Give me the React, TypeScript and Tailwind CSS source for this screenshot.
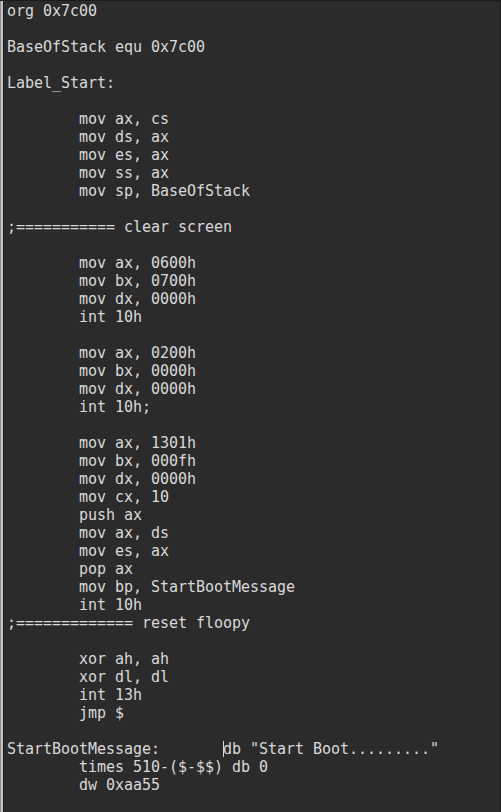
const lines: string[] = [
  "org 0x7c00",
  "",
  "BaseOfStack equ 0x7c00",
  "",
  "Label_Start:",
  "",
  "        mov ax, cs",
  "        mov ds, ax",
  "        mov es, ax",
  "        mov ss, ax",
  "        mov sp, BaseOfStack",
  "",
  ";=========== clear screen",
  "",
  "        mov ax, 0600h",
  "        mov bx, 0700h",
  "        mov dx, 0000h",
  "        int 10h",
  "",
  "        mov ax, 0200h",
  "        mov bx, 0000h",
  "        mov dx, 0000h",
  "        int 10h;",
  "",
  "        mov ax, 1301h",
  "        mov bx, 000fh",
  "        mov dx, 0000h",
  "        mov cx, 10",
  "        push ax",
  "        mov ax, ds",
  "        mov es, ax",
  "        pop ax",
  "        mov bp, StartBootMessage",
  "        int 10h",
  ";============= reset floopy",
  "",
  "        xor ah, ah",
  "        xor dl, dl",
  "        int 13h",
  "        jmp $",
  "",
];

export default function App() {
  return (
    <div className="w-[501px] h-[812px] overflow-hidden bg-[#2b2b2b] flex border-t border-[#1c1c1c]">
      {/* left gutter edge */}
      <div className="w-[3px] bg-[#c4c4c4] border-l border-[#8c8c8c]" />
      <div className="w-px bg-[#1a1a1a]" />
      <div
        className="flex-1 pl-[3px] pt-px text-[15px] leading-[18px] text-[#d9d9d9] whitespace-pre tracking-[-0.03px] border-r border-[#1c1c1c]"
        style={{ fontFamily: '"DejaVu Sans Mono", "Liberation Mono", monospace' }}
      >
        {lines.map((line, i) => (
          <div key={i} className="h-[18px]">
            {line}
          </div>
        ))}
        <div className="h-[18px] flex items-center">
          <span>{"StartBootMessage:       "}</span>
          <span className="w-px h-[16px] bg-[#d9d9d9] -mr-px" />
          <span>{'db "Start Boot........."'}</span>
        </div>
        <div className="h-[18px]">{"        times 510-($-$$) db 0"}</div>
        <div className="h-[18px]">{"        dw 0xaa55"}</div>
      </div>
    </div>
  );
}
